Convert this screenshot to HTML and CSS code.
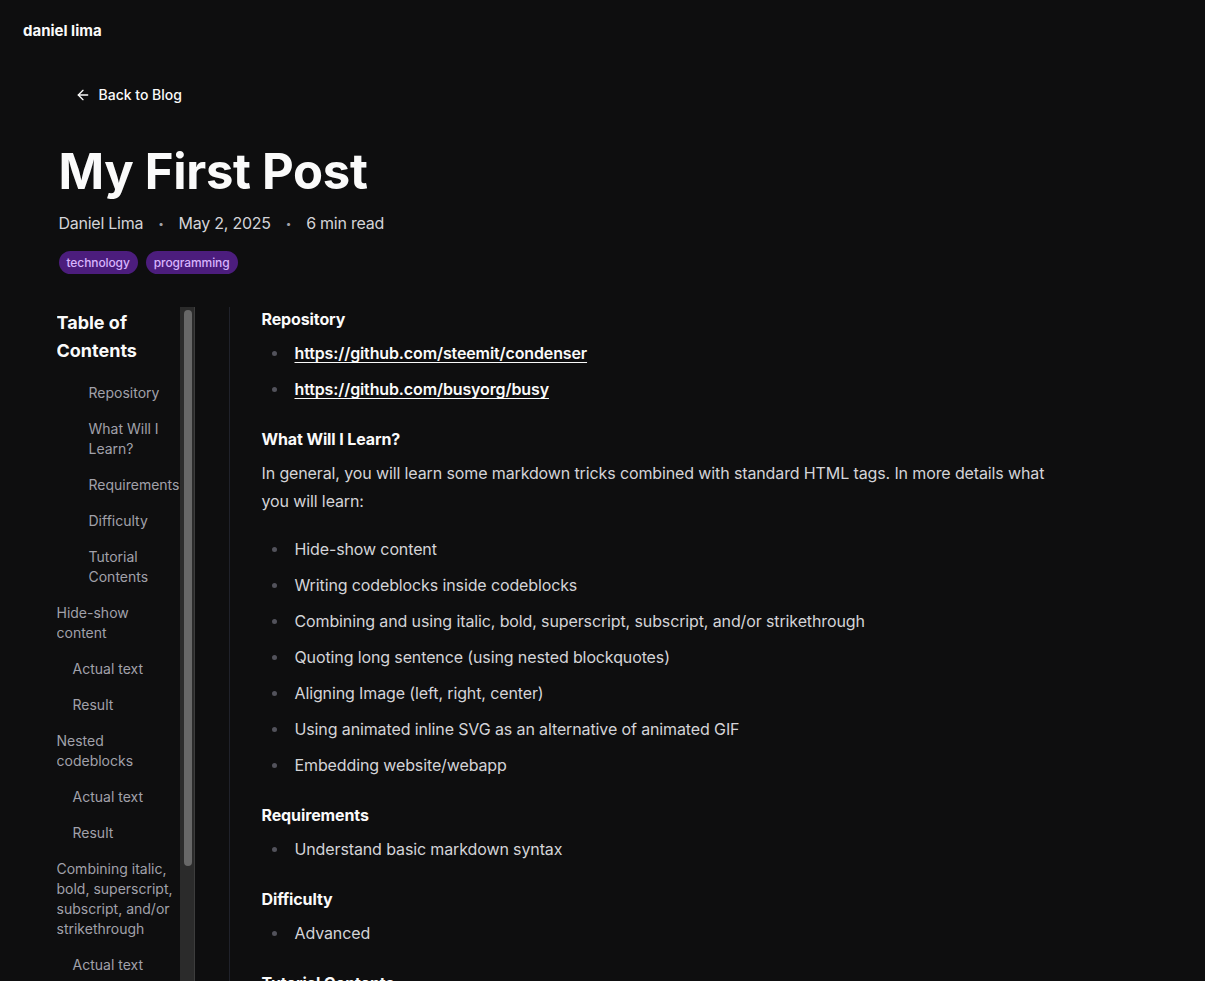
FILE: index.html
```html
<!DOCTYPE html>
<html lang="en">
<head>
<meta charset="utf-8">
<title>My First Post — daniel lima</title>
<link rel="stylesheet" href="styles.css">
</head>
<body>
<header class="site-header">
  <a class="brand" href="#">daniel lima</a>
</header>
<main class="container">
  <a class="back-link" href="#">
    <svg class="back-icon" viewBox="0 0 24 24" width="16" height="16" fill="none" stroke="currentColor" stroke-width="2" stroke-linecap="round" stroke-linejoin="round"><path d="m12 19-7-7 7-7"/><path d="M19 12H5"/></svg>
    <span>Back to Blog</span>
  </a>
  <h1 class="post-title">My First Post</h1>
  <div class="post-meta">
    <span>Daniel Lima</span>
    <span class="meta-dot">•</span>
    <span>May 2, 2025</span>
    <span class="meta-dot">•</span>
    <span>6 min read</span>
  </div>
  <div class="tags">
    <span class="tag">technology</span>
    <span class="tag">programming</span>
  </div>

  <div class="post-layout">
    <aside class="toc">
      <nav class="toc-scroll">
        <h2 class="toc-title">Table of Contents</h2>
        <ul class="toc-list">
          <li class="lvl-3"><a href="#">Repository</a></li>
          <li class="lvl-3"><a href="#">What Will I Learn?</a></li>
          <li class="lvl-3"><a href="#">Requirements</a></li>
          <li class="lvl-3"><a href="#">Difficulty</a></li>
          <li class="lvl-3"><a href="#">Tutorial Contents</a></li>
          <li class="lvl-1"><a href="#">Hide-show content</a></li>
          <li class="lvl-2"><a href="#">Actual text</a></li>
          <li class="lvl-2"><a href="#">Result</a></li>
          <li class="lvl-1"><a href="#">Nested codeblocks</a></li>
          <li class="lvl-2"><a href="#">Actual text</a></li>
          <li class="lvl-2"><a href="#">Result</a></li>
          <li class="lvl-1"><a href="#">Combining italic, bold, superscript, subscript, and/or strikethrough</a></li>
          <li class="lvl-2"><a href="#">Actual text</a></li>
          <li class="lvl-2"><a href="#">Result</a></li>
          <li class="lvl-1"><a href="#">Quoting long sentence (using nested blockquotes)</a></li>
          <li class="lvl-2"><a href="#">Actual text</a></li>
          <li class="lvl-2"><a href="#">Result</a></li>
          <li class="lvl-1"><a href="#">Aligning Image (left, right, center)</a></li>
          <li class="lvl-2"><a href="#">Actual text</a></li>
          <li class="lvl-2"><a href="#">Result</a></li>
          <li class="lvl-1"><a href="#">Using animated inline SVG as an alternative of animated GIF</a></li>
          <li class="lvl-2"><a href="#">Actual text</a></li>
          <li class="lvl-2"><a href="#">Result</a></li>
          <li class="lvl-1"><a href="#">Embedding website/webapp</a></li>
          <li class="lvl-2"><a href="#">Actual text</a></li>
          <li class="lvl-2"><a href="#">Result</a></li>
        </ul>
      </nav>
      <div class="toc-scrollbar" aria-hidden="true">
        <div class="toc-thumb"></div>
      </div>
    </aside>

    <article class="post-body">
      <h3>Repository</h3>
      <ul>
        <li><a href="#">https://github.com/steemit/condenser</a></li>
        <li><a href="#">https://github.com/busyorg/busy</a></li>
      </ul>
      <h3>What Will I Learn?</h3>
      <p>In general, you will learn some markdown tricks combined with standard HTML tags. In more details what you will learn:</p>
      <ul>
        <li>Hide-show content</li>
        <li>Writing codeblocks inside codeblocks</li>
        <li>Combining and using italic, bold, superscript, subscript, and/or strikethrough</li>
        <li>Quoting long sentence (using nested blockquotes)</li>
        <li>Aligning Image (left, right, center)</li>
        <li>Using animated inline SVG as an alternative of animated GIF</li>
        <li>Embedding website/webapp</li>
      </ul>
      <h3>Requirements</h3>
      <ul>
        <li>Understand basic markdown syntax</li>
      </ul>
      <h3>Difficulty</h3>
      <ul>
        <li>Advanced</li>
      </ul>
      <h3>Tutorial Contents</h3>
      <p>Markdown is a lightweight markup language with plain text formatting syntax.</p>
    </article>
  </div>
</main>
</body>
</html>
```

FILE: styles.css
```css
html {
  background: #0e0e0f;
}

body {
  margin: 0;
  background: #0e0e0f;
  color: #d4d4d8;
  font-family: Inter, "Liberation Sans", sans-serif;
  font-size: 16px;
  line-height: 28px;
}

a {
  color: inherit;
  text-decoration: none;
}

.site-header {
  height: 60px;
  padding: 0 23px;
  display: flex;
  align-items: center;
}

.brand {
  margin-top: 2px;
  font-size: 15px;
  font-weight: 700;
  line-height: 22px;
  color: #fafafa;
}

.container {
  max-width: 1152px;
  margin: 0 auto;
  padding: 23px 32px 0;
  box-sizing: border-box;
}

.back-link {
  display: inline-flex;
  align-items: center;
  gap: 8px;
  padding: 0 16px;
  font-size: 14px;
  font-weight: 500;
  line-height: 20px;
  color: #fafafa;
}

.back-icon {
  display: block;
}

.post-title {
  margin: 33px 0 0;
  font-size: 49px;
  line-height: 56px;
  font-weight: 700;
  color: #fafafa;
  letter-spacing: -0.3px;
}

.post-meta {
  margin-top: 11px;
  display: flex;
  align-items: center;
  gap: 15px;
  font-size: 16px;
  line-height: 24px;
  color: #d4d4d8;
  letter-spacing: -0.25px;
}

.meta-dot {
  font-size: 10px;
  color: #a1a1aa;
}

.tags {
  margin-top: 16px;
  display: flex;
  gap: 8px;
}

.tag {
  padding: 2px 8px 1px;
  border-radius: 999px;
  background: #4c1d7d;
  color: #d8b4fe;
  font-size: 12px;
  line-height: 20px;
  font-weight: 500;
  letter-spacing: -0.1px;
}

.post-layout {
  margin: 33px 0 0 -2px;
  display: flex;
  align-items: flex-start;
  gap: 34px;
}

/* table of contents */
.toc {
  flex: 0 0 138px;
  height: calc(100vh - 128px);
  display: flex;
}

.toc-scroll {
  flex: 1 1 auto;
  min-width: 0;
  overflow: hidden;
}

.toc-scrollbar {
  flex: 0 0 15px;
  box-sizing: border-box;
  padding: 3px 3px 3px 4px;
  background: #2b2b2b;
  box-shadow: inset -1px 0 0 #3d3d3d;
}

.toc-thumb {
  height: 556px;
  border-radius: 4px;
  background: #676767;
}

.toc-title {
  margin: 2px 0 18px;
  font-size: 18px;
  line-height: 28px;
  font-weight: 700;
  color: #fafafa;
}

.toc-list {
  list-style: none;
  margin: 0;
  padding: 0;
  display: flex;
  flex-direction: column;
  gap: 16px;
}

.toc-list li {
  font-size: 14px;
  line-height: 20px;
  color: #a1a1aa;
}

.toc-list .lvl-2 {
  padding-left: 16px;
}

.toc-list .lvl-3 {
  padding-left: 32px;
}

/* article */
.post-body {
  flex: 1 1 auto;
  max-width: 800px;
  border-left: 1px solid #20222b;
  padding-left: 32px;
  min-height: 900px;
  letter-spacing: -0.12px;
}

.post-body h3 {
  margin: 24px 0 8px;
  font-size: 16px;
  line-height: 24px;
  font-weight: 700;
  color: #fafafa;
}

.post-body h3:first-child {
  margin-top: 0;
}

.post-body p {
  margin: 8px 0 20px;
}

.post-body ul {
  list-style: none;
  margin: 8px 0 0;
  padding-left: 33px;
}

.post-body li {
  position: relative;
}

.post-body li + li {
  margin-top: 8px;
}

.post-body li::before {
  content: "";
  position: absolute;
  left: -23px;
  top: 12px;
  width: 5px;
  height: 5px;
  border-radius: 50%;
  background: #52525b;
}

.post-body li a {
  color: #fafafa;
  font-weight: 600;
  text-decoration: underline;
  text-underline-offset: 3px;
}
```
